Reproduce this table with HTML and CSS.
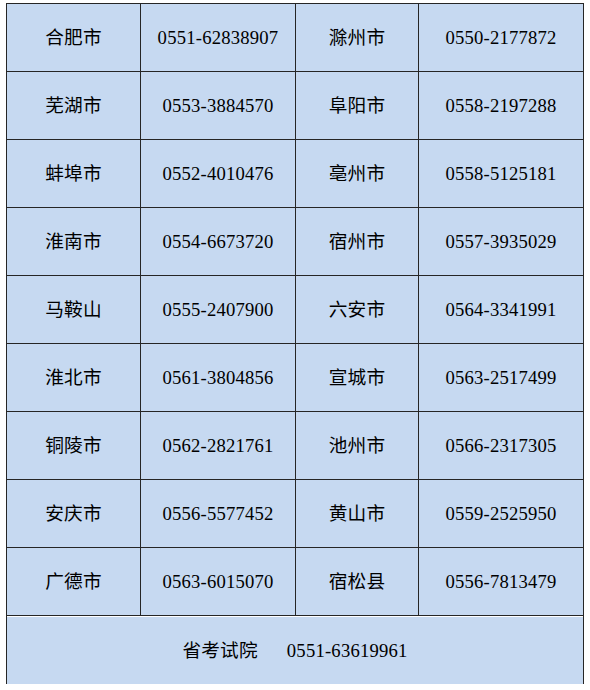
FILE: index.html
```html
<!DOCTYPE html>
<html lang="zh-CN">
<head>
<meta charset="utf-8">
<title>联系电话</title>
<link rel="stylesheet" href="styles.css">
</head>
<body>
<div class="table">
  <div class="cell">合肥市</div><div class="cell">0551-62838907</div><div class="cell">滁州市</div><div class="cell">0550-2177872</div>
  <div class="cell">芜湖市</div><div class="cell">0553-3884570</div><div class="cell">阜阳市</div><div class="cell">0558-2197288</div>
  <div class="cell">蚌埠市</div><div class="cell">0552-4010476</div><div class="cell">亳州市</div><div class="cell">0558-5125181</div>
  <div class="cell">淮南市</div><div class="cell">0554-6673720</div><div class="cell">宿州市</div><div class="cell">0557-3935029</div>
  <div class="cell">马鞍山</div><div class="cell">0555-2407900</div><div class="cell">六安市</div><div class="cell">0564-3341991</div>
  <div class="cell">淮北市</div><div class="cell">0561-3804856</div><div class="cell">宣城市</div><div class="cell">0563-2517499</div>
  <div class="cell">铜陵市</div><div class="cell">0562-2821761</div><div class="cell">池州市</div><div class="cell">0566-2317305</div>
  <div class="cell">安庆市</div><div class="cell">0556-5577452</div><div class="cell">黄山市</div><div class="cell">0559-2525950</div>
  <div class="cell">广德市</div><div class="cell">0563-6015070</div><div class="cell">宿松县</div><div class="cell">0556-7813479</div>
  <div class="cell footer"><span class="org">省考试院</span><span>0551-63619961</span></div>
</div>
</body>
</html>
```
FILE: styles.css
```css
html, body {
  margin: 0;
  padding: 0;
  background: #ffffff;
}

body {
  padding: 3px 0 0 6px;
  font-family: "Liberation Serif", "Noto Sans CJK SC", serif;
  font-size: 18.67px;
  color: #000000;
}

.table {
  display: grid;
  grid-template-columns: 133px 154px 122px 164px;
  grid-auto-rows: 67px;
  gap: 1px;
  padding: 1px;
  width: max-content;
  background: #262626;
}

.cell {
  background: #c6d9f1;
  display: flex;
  align-items: center;
  justify-content: center;
  line-height: 1;
  white-space: nowrap;
  padding-top: 2px;
  letter-spacing: 0.2px;
  box-sizing: border-box;
}

.footer {
  grid-column: 1 / -1;
  height: 68px;
  border-top: 1px solid #ffffff;
  gap: 29px;
}
```
